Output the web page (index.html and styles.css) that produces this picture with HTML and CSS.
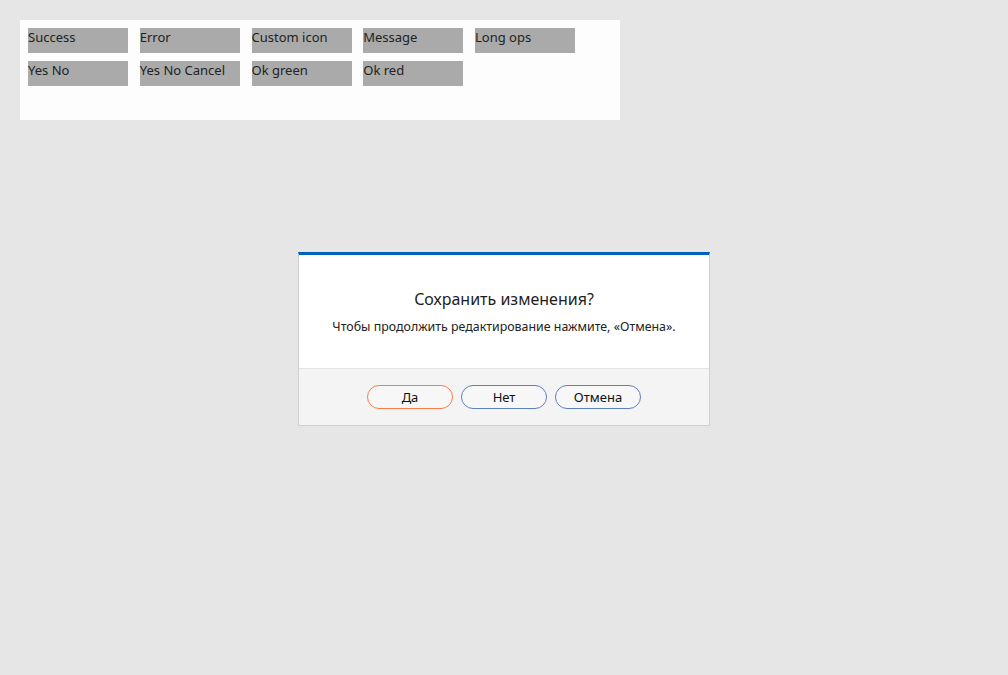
FILE: index.html
```html
<!DOCTYPE html>
<html>
<head>
<meta charset="utf-8">
<link rel="stylesheet" href="styles.css">
</head>
<body>
<div class="panel">
  <div class="row">
    <div class="btn">Success</div>
    <div class="btn">Error</div>
    <div class="btn">Custom icon</div>
    <div class="btn">Message</div>
    <div class="btn">Long ops</div>
  </div>
  <div class="row">
    <div class="btn">Yes No</div>
    <div class="btn">Yes No Cancel</div>
    <div class="btn">Ok green</div>
    <div class="btn">Ok red</div>
  </div>
</div>
<div class="dialog">
  <div class="dialog-body">
    <div class="title">Сохранить изменения?</div>
    <div class="text">Чтобы продолжить редактирование нажмите, «Отмена».</div>
  </div>
  <div class="dialog-footer">
    <div class="dbtn primary">Да</div>
    <div class="dbtn">Нет</div>
    <div class="dbtn">Отмена</div>
  </div>
</div>
</body>
</html>
```
FILE: styles.css
```css
html, body {
  margin: 0;
  padding: 0;
  background: #e6e6e6;
  font-family: "Noto Sans", "Open Sans", sans-serif;
  color: #222;
}
body {
  position: relative;
  width: 1008px;
  height: 675px;
  overflow: hidden;
}
.panel {
  position: absolute;
  left: 20px;
  top: 20px;
  width: 592px;
  height: 92px;
  padding: 8px 0 0 8px;
  background: #fdfdfd;
  display: flex;
  flex-direction: column;
  gap: 8px;
}
.row {
  display: flex;
  gap: 11.75px;
}
.btn {
  width: 100px;
  height: 25px;
  background: #aaaaaa;
  font-size: 13px;
  line-height: 18px;
  color: #222;
}
.dialog {
  position: absolute;
  left: 298px;
  top: 252px;
  width: 410px;
  border: 1px solid #cfcfcf;
  border-top: 3px solid #0060c0;
  background: #fff;
}
.dialog-body {
  height: 113px;
  box-sizing: border-box;
  padding-top: 33px;
  text-align: center;
}
.title {
  font-size: 16px;
  line-height: 22px;
  color: #1e1e1e;
}
.text {
  font-size: 12.4px;
  line-height: 18px;
  margin-top: 8px;
  color: #222;
}
.dialog-footer {
  height: 57px;
  border-top: 1px solid #e5e5e5;
  background: #f4f4f4;
  display: flex;
  justify-content: center;
  align-items: flex-start;
  padding-top: 16px;
  box-sizing: border-box;
  gap: 8px;
}
.dbtn {
  width: 84px;
  height: 22px;
  border: 1px solid #5c7fbd;
  border-radius: 12px;
  font-size: 13px;
  line-height: 22px;
  text-align: center;
  color: #111;
  background: #f7f7f7;
}
.dbtn.primary {
  border-color: #ff7a45;
}
```
